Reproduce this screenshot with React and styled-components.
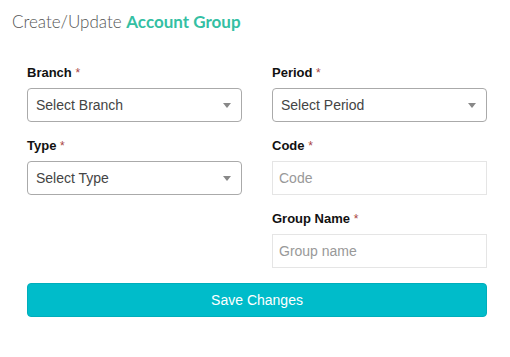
import React from 'react'
import styled, { createGlobalStyle } from 'styled-components'

const GlobalStyle = createGlobalStyle`
  body {
    margin: 0;
    background: #fff;
    font-family: "Liberation Sans", Arial, sans-serif;
  }
`

const App = () => {
  return (
    <>
      <GlobalStyle />
      <Page>
        <Title>
          Create/Update <Accent>Account Group</Accent>
        </Title>
        <Form>
          <Grid>
            <Column>
              <Field>
                <Label>Branch <Req>*</Req></Label>
                <Select>
                  <span>Select Branch</span>
                  <Caret />
                </Select>
              </Field>
              <Field>
                <Label>Type <Req>*</Req></Label>
                <Select>
                  <span>Select Type</span>
                  <Caret />
                </Select>
              </Field>
            </Column>
            <Column>
              <Field>
                <Label>Period <Req>*</Req></Label>
                <Select>
                  <span>Select Period</span>
                  <Caret />
                </Select>
              </Field>
              <Field>
                <Label>Code <Req>*</Req></Label>
                <Input placeholder="Code" />
              </Field>
              <Field>
                <Label>Group Name <Req>*</Req></Label>
                <Input placeholder="Group name" />
              </Field>
            </Column>
          </Grid>
          <Button>Save Changes</Button>
        </Form>
      </Page>
    </>
  )
}

export default App

const Page = styled.div`
    padding: 12px 0 0 12px;
`

const Title = styled.div`
    font-family: "Lato", sans-serif;
    font-weight: 300;
    font-size: 17px;
    line-height: 20px;
    color: #555;
`

const Accent = styled.span`
    color: #34bfa3;
    font-weight: 700;
`

const Form = styled.div`
    width: 460px;
    margin: 33px 0 0 15px;
`

const Grid = styled.div`
    display: grid;
    grid-template-columns: 215px 215px;
    column-gap: 30px;
`

const Column = styled.div`
    display: flex;
    flex-direction: column;
`

const Field = styled.div`
    display: flex;
    flex-direction: column;
    margin-bottom: 16px;
`

const Label = styled.label`
    font-size: 13px;
    font-weight: 700;
    color: #111;
    line-height: 16px;
    margin-bottom: 7px;
`

const Req = styled.span`
    color: #a94442;
    font-weight: 400;
    font-size: 12px;
`

const Select = styled.div`
    height: 34px;
    box-sizing: border-box;
    border: 1px solid #aaa;
    border-radius: 4px;
    padding: 0 8px;
    display: flex;
    align-items: center;
    justify-content: space-between;
    font-size: 14px;
    color: #444;
`

const Caret = styled.span`
    width: 0;
    height: 0;
    border-left: 4px solid transparent;
    border-right: 4px solid transparent;
    border-top: 5px solid #888;
    margin-right: 2px;
`

const Input = styled.input`
    height: 34px;
    box-sizing: border-box;
    border: 1px solid #e5e5e5;
    border-radius: 0;
    padding: 0 6px;
    font-family: "Liberation Sans", Arial, sans-serif;
    font-size: 14px;
    color: #555;
    outline: none;

    &::placeholder {
        color: #999;
    }
`

const Button = styled.div`
    height: 34px;
    box-sizing: border-box;
    background: #00bcca;
    border: 1px solid #00aebb;
    border-radius: 4px;
    color: #fff;
    font-size: 14px;
    display: flex;
    align-items: center;
    justify-content: center;
    margin-top: -1px;
`
